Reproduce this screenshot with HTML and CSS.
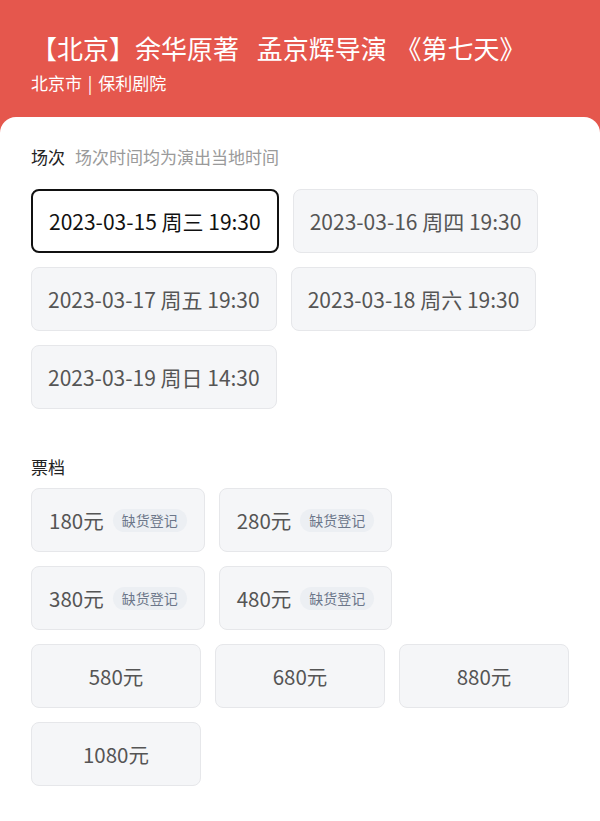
FILE: index.html
```html
<!DOCTYPE html>
<html lang="zh-CN">
<head>
<meta charset="utf-8">
<link rel="stylesheet" href="styles.css">
</head>
<body>
<div class="page">
  <header class="hero">
    <h1 class="title">【北京】余华原著&nbsp;&nbsp;孟京辉导演 《第七天》</h1>
    <div class="venue">北京市 | 保利剧院</div>
  </header>
  <main class="card">
    <section class="section">
      <div class="sec-head"><span class="sec-title">场次</span><span class="sec-note">场次时间均为演出当地时间</span></div>
      <div class="options">
        <div class="opt date selected">2023-03-15 周三 19:30</div>
        <div class="opt date">2023-03-16 周四 19:30</div>
        <div class="opt date">2023-03-17 周五 19:30</div>
        <div class="opt date">2023-03-18 周六 19:30</div>
        <div class="opt date">2023-03-19 周日 14:30</div>
      </div>
    </section>
    <section class="section tickets">
      <div class="sec-head"><span class="sec-title">票档</span></div>
      <div class="options">
        <div class="opt price">180元<span class="badge">缺货登记</span></div>
        <div class="opt price">280元<span class="badge">缺货登记</span></div>
        <div class="opt price">380元<span class="badge">缺货登记</span></div>
        <div class="opt price">480元<span class="badge">缺货登记</span></div>
        <div class="opt price">580元</div>
        <div class="opt price">680元</div>
        <div class="opt price">880元</div>
        <div class="opt price">1080元</div>
      </div>
    </section>
  </main>
</div>
</body>
</html>
```
FILE: styles.css
```css
html, body {
  margin: 0;
  padding: 0;
}
body {
  background: #e5574d;
  font-family: "Noto Sans CJK SC", sans-serif;
  width: 600px;
  min-height: 821px;
}
.page {
  display: flex;
  flex-direction: column;
  min-height: 821px;
}
.hero {
  padding: 32px 31px 23px;
  color: #fff;
}
.title {
  margin: 0;
  font-size: 26px;
  font-weight: 400;
  line-height: 32px;
  word-spacing: 3px;
  white-space: nowrap;
}
.venue {
  margin-top: 8px;
  font-size: 17px;
  line-height: 22px;
  word-spacing: 2px;
}
.card {
  flex: 1;
  background: #fff;
  border-radius: 16px 16px 0 0;
  padding: 28px 31px 20px;
}
.sec-head {
  display: flex;
  align-items: baseline;
  gap: 10px;
  line-height: 24px;
}
.sec-title {
  font-size: 17px;
  color: #222;
}
.sec-note {
  font-size: 17px;
  color: #9a9a9a;
}
.options {
  display: flex;
  flex-wrap: wrap;
  gap: 14px;
  margin-top: 20px;
}
.opt {
  box-sizing: border-box;
  height: 64px;
  padding: 0 17px;
  display: flex;
  align-items: center;
  justify-content: center;
  background: #f5f6f8;
  border: 1px solid #e6e7ea;
  border-radius: 8px;
  font-size: 20px;
  color: #555;
}
.opt.date {
  font-size: 21px;
  padding: 0 16px;
}
.opt.selected {
  background: #fff;
  border: 2px solid #111;
  color: #111;
}
.tickets {
  margin-top: 46px;
}
.tickets .options {
  margin-top: 9px;
}
.price {
  min-width: 170px;
  font-size: 20.5px;
}
.badge {
  margin-left: 9px;
  height: 23px;
  padding: 0 9px;
  border-radius: 12px;
  background: #eceff3;
  color: #6c778a;
  font-size: 14px;
  line-height: 23px;
}
```
